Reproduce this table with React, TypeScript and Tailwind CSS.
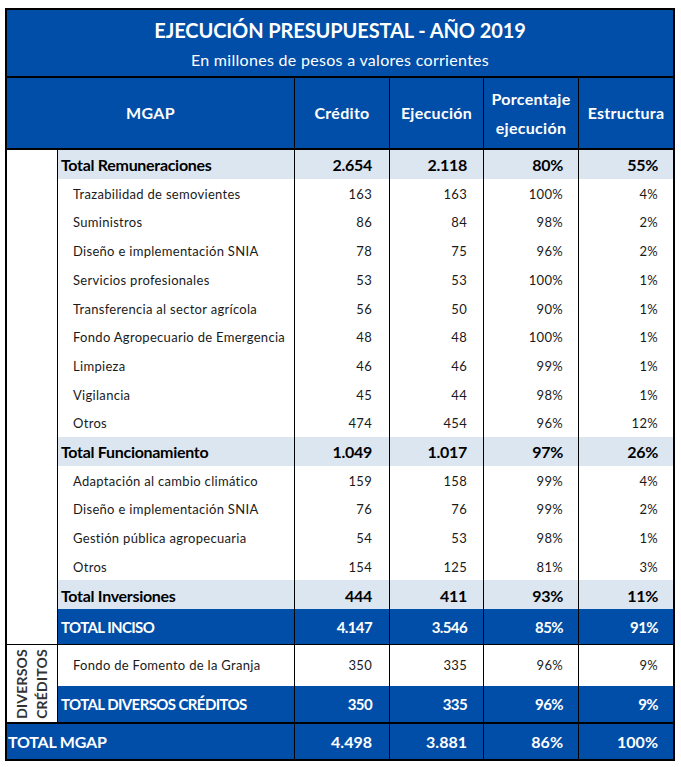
import React from "react";

const BLUE = "bg-[#004ea8]";

type Row = { label: string; c: string; e: string; p: string; s: string; kind: "total" | "detail" };

const rows: Row[] = [
  { label: "Total Remuneraciones", c: "2.654", e: "2.118", p: "80%", s: "55%", kind: "total" },
  { label: "Trazabilidad de semovientes", c: "163", e: "163", p: "100%", s: "4%", kind: "detail" },
  { label: "Suministros", c: "86", e: "84", p: "98%", s: "2%", kind: "detail" },
  { label: "Diseño e implementación SNIA", c: "78", e: "75", p: "96%", s: "2%", kind: "detail" },
  { label: "Servicios profesionales", c: "53", e: "53", p: "100%", s: "1%", kind: "detail" },
  { label: "Transferencia al sector agrícola", c: "56", e: "50", p: "90%", s: "1%", kind: "detail" },
  { label: "Fondo Agropecuario de Emergencia", c: "48", e: "48", p: "100%", s: "1%", kind: "detail" },
  { label: "Limpieza", c: "46", e: "46", p: "99%", s: "1%", kind: "detail" },
  { label: "Vigilancia", c: "45", e: "44", p: "98%", s: "1%", kind: "detail" },
  { label: "Otros", c: "474", e: "454", p: "96%", s: "12%", kind: "detail" },
  { label: "Total Funcionamiento", c: "1.049", e: "1.017", p: "97%", s: "26%", kind: "total" },
  { label: "Adaptación al cambio climático", c: "159", e: "158", p: "99%", s: "4%", kind: "detail" },
  { label: "Diseño e implementación SNIA", c: "76", e: "76", p: "99%", s: "2%", kind: "detail" },
  { label: "Gestión pública agropecuaria", c: "54", e: "53", p: "98%", s: "1%", kind: "detail" },
  { label: "Otros", c: "154", e: "125", p: "81%", s: "3%", kind: "detail" },
  { label: "Total Inversiones", c: "444", e: "411", p: "93%", s: "11%", kind: "total" },
];

function NumCells({ c, e, p, s, cls }: { c: string; e: string; p: string; s: string; cls: string }) {
  return (
    <>
      <div className={`w-[95px] border-r border-black flex items-center justify-end pr-[17px] ${cls}`}>{c}</div>
      <div className={`w-[94px] border-r border-black flex items-center justify-end pr-[16px] ${cls}`}>{e}</div>
      <div className={`w-[95px] border-r border-black flex items-center justify-end pr-[15px] ${cls}`}>{p}</div>
      <div className={`w-[94px] flex items-center justify-end pr-[15px] ${cls}`}>{s}</div>
    </>
  );
}

function DataRow({ r }: { r: Row }) {
  const total = r.kind === "total";
  const txt = total
    ? "text-[16px] font-bold text-black tracking-[-0.3px] pt-[2px]"
    : "text-[13px] text-[#1a1a1a] tracking-[0.3px] pt-[3px]";
  return (
    <div className={`flex h-[28.7px] ${total ? "bg-[#dce6f1]" : "bg-white"}`}>
      <div className={`w-[237px] border-r border-black flex items-center ${total ? "pl-[3px]" : "pl-[15px]"} ${txt}`}>
        {r.label}
      </div>
      <NumCells c={r.c} e={r.e} p={r.p} s={r.s} cls={txt} />
    </div>
  );
}

function BlueRow({ label, c, e, p, s, h }: { label: string; c: string; e: string; p: string; s: string; h: string }) {
  const txt = "text-[15px] font-bold text-white tracking-[-0.6px] pt-[1px]";
  return (
    <div className={`flex ${h} ${BLUE}`}>
      <div className={`w-[237px] border-r border-black flex items-center pl-[3px] ${txt}`}>{label}</div>
      <NumCells c={c} e={e} p={p} s={s} cls={txt} />
    </div>
  );
}

export default function App() {
  return (
    <div className="bg-white w-[681px] h-[767px] pt-[8px] pl-[5px]" style={{ fontFamily: "Lato, 'Open Sans', sans-serif" }}>
      <div className="w-[670px] border-2 border-black">
        {/* Title */}
        <div className={`${BLUE} h-[68px] border-b-2 border-black flex flex-col items-center text-white`}>
          <div className="text-[20px] font-bold leading-none mt-[10px] tracking-[-0.1px]">EJECUCIÓN PRESUPUESTAL - AÑO 2019</div>
          <div className="text-[16px] leading-none mt-[12px] tracking-[0.3px]">En millones de pesos a valores corrientes</div>
        </div>
        {/* Header */}
        <div className={`${BLUE} h-[72px] border-b-2 border-black flex text-white text-[16px] font-bold tracking-[0.3px]`}>
          <div className="w-[288px] border-r border-black flex items-center justify-center">MGAP</div>
          <div className="w-[95px] border-r border-black flex items-center justify-center">Crédito</div>
          <div className="w-[94px] border-r border-black flex items-center justify-center">Ejecución</div>
          <div className="w-[95px] border-r border-black flex flex-col items-center justify-center leading-[29px]">
            <span>Porcentaje</span>
            <span>ejecución</span>
          </div>
          <div className="w-[94px] flex items-center justify-center">Estructura</div>
        </div>
        {/* Section A */}
        <div className="flex border-b border-black">
          <div className="w-[51px] border-r border-black bg-white" />
          <div className="flex flex-col">
            {rows.map((r, i) => (
              <DataRow key={i} r={r} />
            ))}
            <BlueRow label="TOTAL INCISO" c="4.147" e="3.546" p="85%" s="91%" h="h-[35px]" />
          </div>
        </div>
        {/* Section B */}
        <div className="flex border-b-2 border-black">
          <div className="w-[51px] border-r border-black bg-white flex items-center justify-center">
            <div className="[writing-mode:vertical-rl] rotate-180 text-[14px] font-bold text-[#333] leading-[20px] text-center tracking-[0.2px]">
              DIVERSOS
              <br />
              CRÉDITOS
            </div>
          </div>
          <div className="flex flex-col">
            <div className="flex h-[41px] bg-white">
              <div className="w-[237px] border-r border-black flex items-center pl-[15px] pt-[1px] text-[13px] text-[#1a1a1a] tracking-[0.3px]">
                Fondo de Fomento de la Granja
              </div>
              <NumCells c="350" e="335" p="96%" s="9%" cls="text-[13px] text-[#1a1a1a] tracking-[0.3px] pt-[1px]" />
            </div>
            <BlueRow label="TOTAL DIVERSOS CRÉDITOS" c="350" e="335" p="96%" s="9%" h="h-[36px]" />
          </div>
        </div>
        {/* Section C */}
        <div className={`flex h-[35px] ${BLUE} text-white text-[16px] font-bold`}>
          <div className="w-[288px] border-r border-black flex items-center pl-[1px] tracking-[-0.2px]">TOTAL MGAP</div>
          <NumCells c="4.498" e="3.881" p="86%" s="100%" cls="text-[16px] font-bold text-white" />
        </div>
      </div>
    </div>
  );
}
